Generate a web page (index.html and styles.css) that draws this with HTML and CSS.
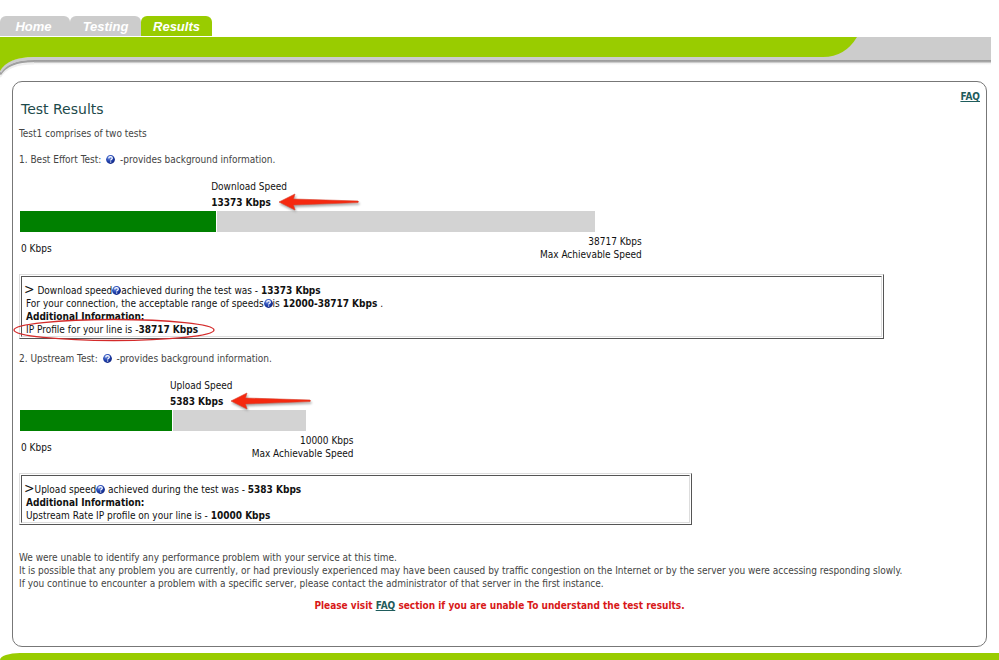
FILE: index.html
```
<!DOCTYPE html>
<html lang="en">
<head>
    <meta charset="UTF-8">
    <meta name="viewport" content="width=device-width, initial-scale=1.0">
    <title>Test Results</title>
    <link rel="stylesheet" href="styles.css">
</head>
<body>
    <!-- shared drawings -->
    <svg class="defs" width="0" height="0" aria-hidden="true">
        <defs>
            <radialGradient id="ball" cx="0.35" cy="0.3" r="0.8">
                <stop offset="0" stop-color="#6f8fe0"/>
                <stop offset="0.5" stop-color="#2143b0"/>
                <stop offset="1" stop-color="#0c1f78"/>
            </radialGradient>
            <symbol id="help" viewBox="0 0 9 9">
                <circle cx="4.5" cy="4.5" r="4.4" fill="url(#ball)"/>
                <path d="M2.7 3.3Q2.9 1.7 4.6 1.7Q6.3 1.8 6.3 3.2Q6.2 4 5.3 4.5Q4.6 4.9 4.6 5.6M4.6 6.5V7.6" fill="none" stroke="#fff" stroke-width="1.3"/>
            </symbol>
            <symbol id="arrow" viewBox="0 0 84 20">
                <path d="M2 10L18 2L16.5 7L81 9Q82 9.8 81 10.6L16.5 13L18 18Z" fill="#f5280f" stroke="#d8402c" stroke-width="0.6"/>
            </symbol>
        </defs>
    </svg>

    <header>
        <nav class="tabs">
            <a href="#home" class="tab">Home</a>
            <a href="#testing" class="tab">Testing</a>
            <a href="#results" class="tab active">Results</a>
        </nav>
        <div class="band">
            <svg class="band-left" width="34" height="44" viewBox="0 0 34 44" aria-hidden="true">
                <path d="M0 40Q8 26.5 34 26.5" fill="none" stroke="#eee" stroke-width="2"/>
                <path d="M0 37.5Q8 24 34 24" fill="none" stroke="#a0a0a0" stroke-width="2.4"/>
                <path d="M0 35Q8 21.5 34 21.5" fill="none" stroke="#ccc" stroke-width="3"/>
                <path d="M0 0H34V20Q8 20 0 34Z" fill="#99cc00"/>
            </svg>
            <div class="band-green"></div>
            <svg class="band-right" width="48" height="28" viewBox="0 0 48 28" aria-hidden="true">
                <path d="M0 0H48Q36 20 14 20H0Z" fill="#99cc00"/>
            </svg>
            <div class="band-grey"></div>
        </div>
    </header>

    <main class="panel">
        <div class="panel-top">
            <h1>Test Results</h1>
            <a href="#faq" class="faq">FAQ</a>
        </div>
        <p class="intro">Test1 comprises of two tests</p>

        <section>
            <h2>1. Best Effort Test: <a href="#help-1" class="help gap" aria-label="Help"><svg><use href="#help"/></svg></a> -provides background information.</h2>
            <div class="speed" style="margin-left: 20%">
                Download Speed
                <div class="value"><b>13373 Kbps</b><svg class="arrow" aria-hidden="true"><use href="#arrow"/></svg></div>
            </div>
            <div class="bar" style="width: 59.8%"><div class="fill" style="width: 34.2%"></div></div>
            <div class="scale" style="width: 64.8%">
                <span>0 Kbps</span>
                <span class="max">38717 Kbps<br>Max Achievable Speed</span>
            </div>
            <div class="box" style="width: 90%">
                <div class="box-in">
                    <p class="first"><span class="gt">&gt;</span> Download speed<a href="#help-2" class="help" aria-label="Help"><svg><use href="#help"/></svg></a>achieved during the test was - <b>13373 Kbps</b></p>
                    <p>For your connection, the acceptable range of speeds<a href="#help-3" class="help" aria-label="Help"><svg><use href="#help"/></svg></a>is <b>12000-38717 Kbps</b> .</p>
                    <p><b>Additional Information:</b></p>
                    <p class="marked">IP Profile for your line is -<b>38717 Kbps</b>
                        <svg class="ring" viewBox="0 0 202 24" aria-hidden="true"><ellipse cx="101" cy="12" rx="100" ry="10.5" fill="none" stroke="#d42a2a" stroke-width="1.3"/></svg>
                    </p>
                </div>
            </div>
        </section>

        <section>
            <h2>2. Upstream Test: <a href="#help-4" class="help gap" aria-label="Help"><svg><use href="#help"/></svg></a> -provides background information.</h2>
            <div class="speed" style="margin-left: 15.7%">
                Upload Speed
                <div class="value"><b>5383 Kbps</b><svg class="arrow" aria-hidden="true"><use href="#arrow"/></svg></div>
            </div>
            <div class="bar" style="width: 29.8%"><div class="fill" style="width: 53.3%"></div></div>
            <div class="scale" style="width: 34.8%">
                <span>0 Kbps</span>
                <span class="max">10000 Kbps<br>Max Achievable Speed</span>
            </div>
            <div class="box" style="width: 70%">
                <div class="box-in">
                    <p class="first"><span class="gt">&gt;</span>Upload speed<a href="#help-5" class="help" aria-label="Help"><svg><use href="#help"/></svg></a> achieved during the test was - <b>5383 Kbps</b></p>
                    <p><b>Additional Information:</b></p>
                    <p>Upstream Rate IP profile on your line is - <b>10000 Kbps</b></p>
                </div>
            </div>
        </section>

        <p class="notes">We were unable to identify any performance problem with your service at this time.<br>
            It is possible that any problem you are currently, or had previously experienced may have been caused by traffic congestion on the Internet or by the server you were accessing responding slowly.<br>
            If you continue to encounter a problem with a specific server, please contact the administrator of that server in the first instance.</p>
        <p class="visit">Please visit <a href="#faq">FAQ</a> section if you are unable To understand the test results.</p>
    </main>

    <footer></footer>
</body>
</html>
```
FILE: styles.css
```
* {
    box-sizing: border-box;
}
body {
    margin: 0;
    background: white;
    color: #111;
    font: 10px/13px Verdana, "DejaVu Sans Condensed", "DejaVu Sans", sans-serif;
    overflow: hidden;
}
h1, h2, p {
    margin: 0;
    font-weight: normal;
}
a {
    color: #1f5c5c;
}
.defs {
    position: absolute;
}

/* tabs and top band */
.tabs {
    display: flex;
    padding-top: 16px;
    height: 37px;
}
.tab {
    width: 71px;
    height: 20px;
    border-radius: 6px 6px 0 0;
    background: #ccc;
    color: white;
    font: italic bold 13px/21px "Liberation Sans", Arial, sans-serif;
    text-align: center;
    text-decoration: none;
}
.tab:first-child {
    width: 70px;
    padding-right: 3px;
}
.tab.active {
    background: #99cc00;
}
.band {
    display: flex;
    height: 44px;
    margin-right: 8px;
}
.band-left, .band-right {
    flex: none;
}
.band-green, .band-grey, .band-right {
    height: 28px;
    background: linear-gradient(#ccc 23px, #999 23px, #aaa 25px, #eee 26px, white 28px);
}
.band-green {
    flex: 1;
    background: linear-gradient(#99cc00 20px, #ccc 20px, #ccc 23px, #999 23px, #aaa 25px, #eee 26px, white 28px);
}
.band-grey {
    width: 134px;
}

.panel {
    margin: 0 12px;
    padding: 8px 6px 34px;
    border: 1px solid #777;
    border-radius: 10px;
}
.panel-top {
    display: flex;
    justify-content: space-between;
}
h1 {
    margin-top: 12px;
    padding-left: 2px;
    color: #1d4a4a;
    font-family: Verdana, "DejaVu Sans", sans-serif;
    font-size: 14px;
    line-height: 15px;
}
.faq {
    font-weight: bold;
}
.intro {
    margin-top: 10px;
    color: #444;
}
h2 {
    margin-top: 13px;
    color: #444;
    font-size: 10px;
}
.help svg {
    width: 9px;
    height: 9px;
    margin: -2px 0;
    vertical-align: 1px;
}
.gap {
    margin: 0 2px;
}

/* speed bars */
.speed {
    margin-top: 14px;
}
.value {
    display: flex;
    align-items: center;
    gap: 6px;
    height: 18px;
}
.arrow {
    width: 84px;
    height: 20px;
    filter: drop-shadow(1px 2px 1px #aaa);
}
.bar {
    height: 21px;
    margin-left: 1px;
    background: #d3d3d3;
}
.fill {
    height: 21px;
    background: #008000;
    border-right: 1px solid white;
}
.scale {
    display: flex;
    justify-content: space-between;
    align-items: center;
    margin-top: 3px;
    padding-left: 2px;
}
.max {
    text-align: right;
}

/* result boxes, double bevel */
.box {
    margin-top: 13px;
    padding: 1px;
    border: 1px solid;
    border-color: #ddd #555 #555 #ddd;
}
.box-in {
    padding: 4px 4px 0;
    border: 1px solid;
    border-color: #555 #ddd #ddd #555;
}
.box .first {
    height: 16px;
    margin-left: -2px;
    line-height: 16px;
}
.gt {
    font-size: 14px;
}
.marked {
    position: relative;
}
.ring {
    position: absolute;
    left: -13px;
    top: -5px;
    width: 202px;
    height: 24px;
}

.notes {
    margin-top: 26px;
    color: #444;
}
.visit {
    margin-top: 9px;
    color: #d81818;
    font-weight: bold;
    text-align: center;
}

footer {
    height: 8px;
    margin-top: 6px;
    background: #99cc00;
    border-radius: 20px 0 0 0 / 7px 0 0 0;
}
```
